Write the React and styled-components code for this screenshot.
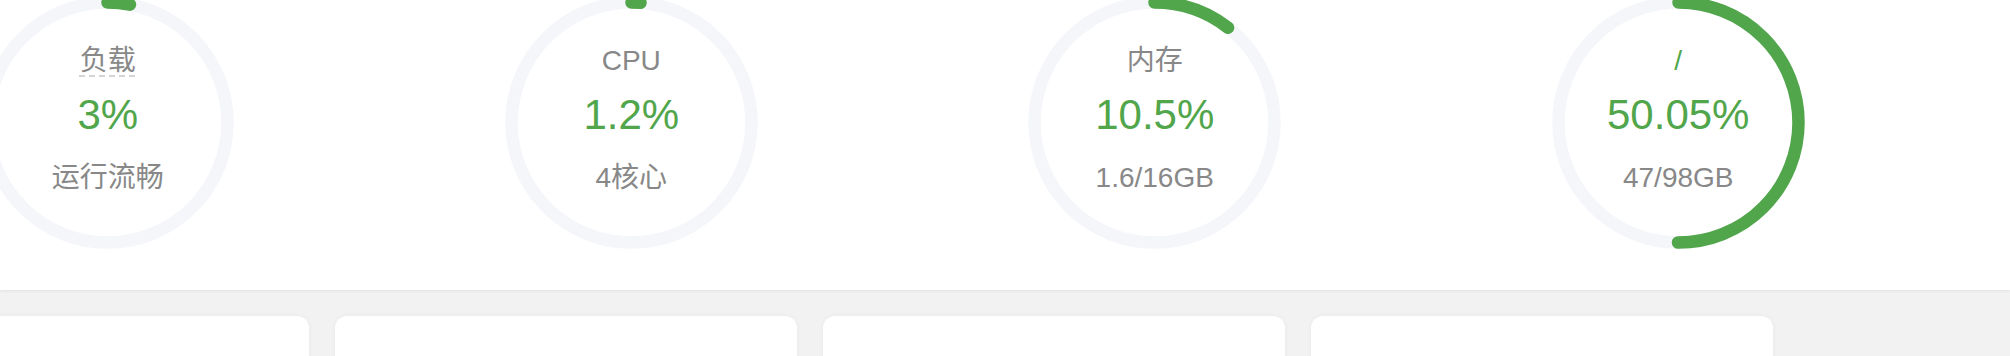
import React from "react"
import styled, { createGlobalStyle } from "styled-components"

const GlobalStyle = createGlobalStyle`
    html, body {
        margin: 0;
        padding: 0;
        background: #f2f2f2;
        overflow: hidden;
        font-family: "Liberation Sans", "Noto Sans CJK SC", sans-serif;
    }
`

const gauges = [
    { label: "负载", value: 3, text: "3%", sub: "运行流畅", hint: true },
    { label: "CPU", value: 1.2, text: "1.2%", sub: "4核心" },
    { label: "内存", value: 10.5, text: "10.5%", sub: "1.6/16GB" },
    { label: "/", value: 50.05, text: "50.05%", sub: "47/98GB", link: true },
]

const SIZE = 253
const R = 120
const CIRC = 2 * Math.PI * R

const Gauge = ({ label, value, text, sub, hint, link }) => {
    return (
        <GaugeBox>
            <Ring width={SIZE} height={SIZE} viewBox={`0 0 ${SIZE} ${SIZE}`}>
                <circle cx={SIZE / 2} cy={SIZE / 2} r={R} fill="none" stroke="#f4f6fa" strokeWidth="12.5" />
                <circle
                    cx={SIZE / 2}
                    cy={SIZE / 2}
                    r={R}
                    fill="none"
                    stroke="#51a64b"
                    strokeWidth="12.5"
                    strokeLinecap="round"
                    strokeDasharray={`${(CIRC * value) / 100} ${CIRC}`}
                    transform={`rotate(-90 ${SIZE / 2} ${SIZE / 2})`}
                />
            </Ring>
            <GaugeText>
                <Label $hint={hint} $link={link}>{label}</Label>
                <Percent>{text}</Percent>
                <Sub>{sub}</Sub>
            </GaugeText>
        </GaugeBox>
    )
}

const App = () => {
    return (
        <Page>
            <GlobalStyle />
            <StatusPanel>
                <GaugeRow>
                    {gauges.map((g) => (
                        <GaugeCol key={g.label}>
                            <Gauge {...g} />
                        </GaugeCol>
                    ))}
                </GaugeRow>
            </StatusPanel>
            <CardRow>
                <Card />
                <Card />
                <Card />
                <Card />
            </CardRow>
        </Page>
    )
}

export default App


const Page = styled.div`
    width: 2010px;
    height: 356px;
    overflow: hidden;
`

const StatusPanel = styled.div`
    margin-top: -4px;
    padding-bottom: 41px;
    background: #fff;
    box-shadow: 0 1px 3px rgba(0, 0, 0, .07);
`

const GaugeRow = styled.div`
    display: grid;
    grid-template-columns: repeat(4, 523.5px);
    margin-left: -154px;
`

const GaugeCol = styled.div`
    display: flex;
    justify-content: center;
`

const GaugeBox = styled.div`
    display: grid;
    place-items: center;
    width: ${SIZE}px;
    height: ${SIZE}px;

    > * {
        grid-area: 1 / 1;
    }
`

const Ring = styled.svg`
    display: block;
`

const GaugeText = styled.div`
    display: flex;
    flex-direction: column;
    align-items: center;
    text-align: center;
    margin-top: -6px;
`

const Label = styled.span`
    margin-bottom: 4px;
    font-size: 28px;
    line-height: 40px;
    color: ${(p) => (p.$link ? "#51a64b" : "#888")};
    text-decoration: ${(p) => (p.$hint ? "underline dashed #d4d4d4" : "none")};
    text-decoration-thickness: 2px;
    text-underline-offset: 5px;
`

const Percent = styled.span`
    margin-top: 2px;
    font-size: 42px;
    line-height: 56px;
    color: #51a64b;
`

const Sub = styled.span`
    margin-top: 15px;
    font-size: 28px;
    line-height: 40px;
    color: #888;
`

const CardRow = styled.div`
    display: flex;
    gap: 26px;
    margin-left: -153px;
    padding-top: 26px;
`

const Card = styled.div`
    flex: 0 0 462px;
    height: 200px;
    background: #fff;
    border-radius: 12px;
    box-shadow: 0 0 6px rgba(0, 0, 0, .04);
`
